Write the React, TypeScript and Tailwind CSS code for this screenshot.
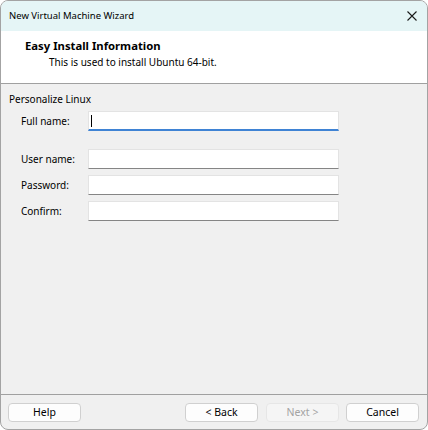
import React from "react";

const font = { fontFamily: '"Noto Sans", "Liberation Sans", sans-serif' };

function Field({ label, focused, top }: { label: string; focused?: boolean; top: string }) {
  return (
    <div className={`flex items-center ${top}`}>
      <label className="w-[87px] pl-[20px] shrink-0 text-[10px] leading-[16px] text-black">{label}</label>
      <div
        className={`relative w-[251px] h-[20px] bg-white border border-[#e3e3e3] ${
          focused ? "border-b-2 border-b-[#3f83d4]" : "border-b-[#858585]"
        }`}
      >
        {focused ? <span className="absolute left-[2px] top-[3px] w-px h-[12px] bg-black" /> : null}
      </div>
    </div>
  );
}

function Btn({ children, disabled, className = "" }: { children: React.ReactNode; disabled?: boolean; className?: string }) {
  return (
    <button
      disabled={disabled}
      className={`w-[73px] h-[19px] rounded-[4px] text-[10.5px] leading-none border ${
        disabled ? "bg-[#f5f5f5] border-[#e6e6e6] text-[#a3a3a3]" : "bg-[#fdfdfd] border-[#d0d0d0] text-black"
      } ${className}`}
    >
      {children}
    </button>
  );
}

export default function App() {
  return (
    <div style={font} className="w-[428px] h-[430px] flex flex-col overflow-hidden rounded-[8px] border border-[#a3a3a3] bg-[#f0f0f0]">
      <div className="h-[30px] shrink-0 flex items-center justify-between bg-[#e5f5f6] pl-[8px] pr-[10px]">
        <span className="text-[9.5px] text-black">New Virtual Machine Wizard</span>
        <svg width="10" height="10" viewBox="0 0 10 10">
          <path d="M0.5 0.5 L9.5 9.5 M9.5 0.5 L0.5 9.5" stroke="#1a1a1a" strokeWidth="1.1" />
        </svg>
      </div>
      <div className="h-[53px] shrink-0 bg-white border-b border-[#a0a0a0] pt-[7px]">
        <div className="pl-[24px] text-[11.3px] font-bold text-black leading-[16px]">Easy Install Information</div>
        <div className="pl-[48px] text-[10px] text-black leading-[16px]">This is used to install Ubuntu 64-bit.</div>
      </div>
      <div className="flex-1 pt-[7px]">
        <div className="pl-[8px] text-[10px] text-black leading-[16px]">Personalize Linux</div>
        <Field label="Full name:" focused top="mt-[4px]" />
        <Field label="User name:" top="mt-[18px]" />
        <Field label="Password:" top="mt-[6px]" />
        <Field label="Confirm:" top="mt-[6px]" />
      </div>
      <div className="h-[35px] shrink-0 border-t border-[#a0a0a0] flex items-start pt-[8px] pl-[7px] pr-[8px]">
        <Btn>Help</Btn>
        <div className="flex-1" />
        <Btn>&lt; Back</Btn>
        <Btn disabled className="ml-[8px]">Next &gt;</Btn>
        <Btn className="ml-[7px]">Cancel</Btn>
      </div>
    </div>
  );
}
